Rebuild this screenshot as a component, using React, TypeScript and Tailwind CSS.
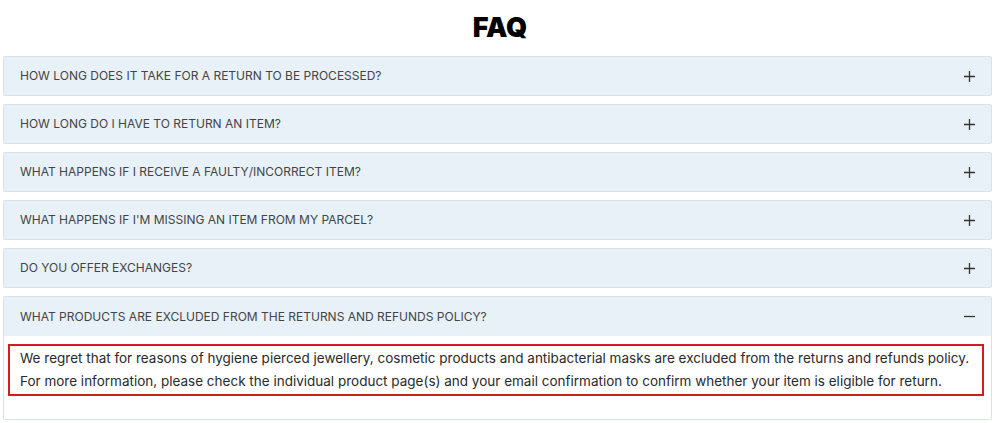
import React from "react";

const questions = [
  "HOW LONG DOES IT TAKE FOR A RETURN TO BE PROCESSED?",
  "HOW LONG DO I HAVE TO RETURN AN ITEM?",
  "WHAT HAPPENS IF I RECEIVE A FAULTY/INCORRECT ITEM?",
  "WHAT HAPPENS IF I'M MISSING AN ITEM FROM MY PARCEL?",
  "DO YOU OFFER EXCHANGES?",
];

function Plus() {
  return (
    <svg width="11" height="11" viewBox="0 0 11 11" className="text-[#333]">
      <path d="M5.5 0v11M0 5.5h11" stroke="currentColor" strokeWidth="1.3" />
    </svg>
  );
}

function Minus() {
  return (
    <svg width="11" height="11" viewBox="0 0 11 11" className="text-[#333]">
      <path d="M0 5.5h11" stroke="currentColor" strokeWidth="1.3" />
    </svg>
  );
}

export default function App() {
  return (
    <div
      className="bg-white w-[1000px] h-[423px] px-[3px]"
      style={{ fontFamily: "Inter, 'Open Sans', sans-serif" }}
    >
      <h1 className="h-[56px] pt-[10px] text-center text-[27px] leading-[36px] font-black text-black">
        FAQ
      </h1>
      <div className="w-[989px] flex flex-col gap-[8px]">
        {questions.map((q) => (
          <div
            key={q}
            className="h-[40px] flex items-center justify-between pl-[16px] pr-[16px] bg-[#e8f1f8] border border-[#d8e2ea] rounded-[2px]"
          >
            <span className="text-[12px] text-[#444]">{q}</span>
            <Plus />
          </div>
        ))}
        <div className="border border-[#d8e2ea] rounded-[2px] bg-white">
          <div className="h-[39px] flex items-center justify-between pl-[16px] pr-[16px] bg-[#e8f1f8]">
            <span className="text-[12px] text-[#444]">
              WHAT PRODUCTS ARE EXCLUDED FROM THE RETURNS AND REFUNDS POLICY?
            </span>
            <Minus />
          </div>
          <div className="pt-[8px] pb-[23px] pl-[4px] pr-[7px]">
            <div className="border-2 border-[#d41c1c] px-[10px] py-[1px] text-[13.5px] leading-[23px] text-[#2a2a2a] whitespace-nowrap">
              We regret that for reasons of hygiene pierced jewellery, cosmetic products and antibacterial masks are excluded from the returns and refunds policy.
              <br />
              For more information, please check the individual product page(s) and your email confirmation to confirm whether your item is eligible for return.
            </div>
          </div>
        </div>
      </div>
    </div>
  );
}
